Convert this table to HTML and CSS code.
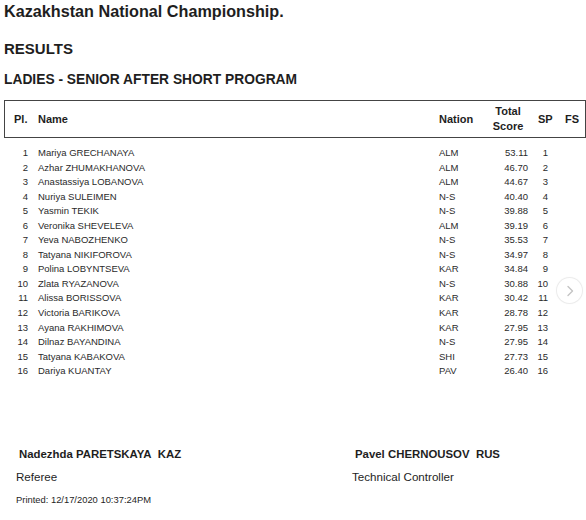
FILE: index.html
```html
<!DOCTYPE html>
<html>
<head>
<meta charset="utf-8">
<link rel="stylesheet" href="styles.css">
</head>
<body>
<div class="page">
  <h1 class="title">Kazakhstan National Championship.</h1>
  <h2 class="results">RESULTS</h2>
  <h3 class="category">LADIES - SENIOR AFTER SHORT PROGRAM</h3>

  <div class="table-head">
    <span class="c-pl">Pl.</span>
    <span class="c-name">Name</span>
    <span class="c-nation">Nation</span>
    <span class="c-score">Total<br>Score</span>
    <span class="c-sp">SP</span>
    <span class="c-fs">FS</span>
  </div>

  <div class="rows">
    <div class="row"><span class="c-pl">1</span><span class="c-name">Mariya GRECHANAYA</span><span class="c-nation">ALM</span><span class="c-score">53.11</span><span class="c-sp">1</span></div>
    <div class="row"><span class="c-pl">2</span><span class="c-name">Azhar ZHUMAKHANOVA</span><span class="c-nation">ALM</span><span class="c-score">46.70</span><span class="c-sp">2</span></div>
    <div class="row"><span class="c-pl">3</span><span class="c-name">Anastassiya LOBANOVA</span><span class="c-nation">ALM</span><span class="c-score">44.67</span><span class="c-sp">3</span></div>
    <div class="row"><span class="c-pl">4</span><span class="c-name">Nuriya SULEIMEN</span><span class="c-nation">N-S</span><span class="c-score">40.40</span><span class="c-sp">4</span></div>
    <div class="row"><span class="c-pl">5</span><span class="c-name">Yasmin TEKIK</span><span class="c-nation">N-S</span><span class="c-score">39.88</span><span class="c-sp">5</span></div>
    <div class="row"><span class="c-pl">6</span><span class="c-name">Veronika SHEVELEVA</span><span class="c-nation">ALM</span><span class="c-score">39.19</span><span class="c-sp">6</span></div>
    <div class="row"><span class="c-pl">7</span><span class="c-name">Yeva NABOZHENKO</span><span class="c-nation">N-S</span><span class="c-score">35.53</span><span class="c-sp">7</span></div>
    <div class="row"><span class="c-pl">8</span><span class="c-name">Tatyana NIKIFOROVA</span><span class="c-nation">N-S</span><span class="c-score">34.97</span><span class="c-sp">8</span></div>
    <div class="row"><span class="c-pl">9</span><span class="c-name">Polina LOBYNTSEVA</span><span class="c-nation">KAR</span><span class="c-score">34.84</span><span class="c-sp">9</span></div>
    <div class="row"><span class="c-pl">10</span><span class="c-name">Zlata RYAZANOVA</span><span class="c-nation">N-S</span><span class="c-score">30.88</span><span class="c-sp">10</span></div>
    <div class="row"><span class="c-pl">11</span><span class="c-name">Alissa BORISSOVA</span><span class="c-nation">KAR</span><span class="c-score">30.42</span><span class="c-sp">11</span></div>
    <div class="row"><span class="c-pl">12</span><span class="c-name">Victoria BARIKOVA</span><span class="c-nation">KAR</span><span class="c-score">28.78</span><span class="c-sp">12</span></div>
    <div class="row"><span class="c-pl">13</span><span class="c-name">Ayana RAKHIMOVA</span><span class="c-nation">KAR</span><span class="c-score">27.95</span><span class="c-sp">13</span></div>
    <div class="row"><span class="c-pl">14</span><span class="c-name">Dilnaz BAYANDINA</span><span class="c-nation">N-S</span><span class="c-score">27.95</span><span class="c-sp">14</span></div>
    <div class="row"><span class="c-pl">15</span><span class="c-name">Tatyana KABAKOVA</span><span class="c-nation">SHI</span><span class="c-score">27.73</span><span class="c-sp">15</span></div>
    <div class="row"><span class="c-pl">16</span><span class="c-name">Dariya KUANTAY</span><span class="c-nation">PAV</span><span class="c-score">26.40</span><span class="c-sp">16</span></div>
  </div>

  <div class="officials">
    <div class="official">
      <div class="off-name">Nadezhda PARETSKAYA&nbsp; KAZ</div>
      <div class="off-role">Referee</div>
    </div>
    <div class="official second">
      <div class="off-name">Pavel CHERNOUSOV&nbsp; RUS</div>
      <div class="off-role">Technical Controller</div>
    </div>
  </div>
  <div class="printed">Printed: 12/17/2020 10:37:24PM</div>

  <div class="next-btn">
    <svg width="10" height="12" viewBox="0 0 10 12"><path d="M3 1.5 L7.5 6 L3 10.5" fill="none" stroke="#c4c4c4" stroke-width="1.4" stroke-linecap="round" stroke-linejoin="round"/></svg>
  </div>
</div>
</body>
</html>
```

FILE: styles.css
```css
html, body {
  margin: 0;
  padding: 0;
  background: #fff;
}
body {
  font-family: "Liberation Sans", Arial, sans-serif;
  color: #1e1e1e;
  width: 586px;
  height: 520px;
  overflow: hidden;
}
.page {
  position: relative;
  padding: 2px 0 0 4px;
}
.title {
  margin: 0;
  font-size: 16.2px;
  line-height: 19px;
  font-weight: bold;
}
.results {
  margin: 19px 0 0;
  font-size: 15px;
  line-height: 18px;
  font-weight: bold;
}
.category {
  margin: 14px 0 0;
  font-size: 13.8px;
  line-height: 16px;
  font-weight: bold;
}
.table-head,
.row {
  display: grid;
  grid-template-columns: 24px 402px 50px 48px 20px 38px;
  align-items: center;
}
.table-head {
  margin-top: 12px;
  height: 38px;
  border: 1.5px solid #444;
  width: 582px;
  box-sizing: border-box;
  font-weight: bold;
  font-size: 11px;
  line-height: 15px;
}
.table-head .c-pl { padding-left: 9px; }
.table-head .c-name { padding-left: 9px; }
.table-head .c-nation { padding-left: 8px; }
.table-head .c-score { text-align: center; padding-left: 6px; }
.table-head .c-sp { padding-left: 9px; }
.table-head .c-fs { padding-left: 16px; }
.rows {
  margin-top: 8px;
  font-size: 9.5px;
  line-height: 14.55px;
  color: #2a2a2a;
}
.row .c-pl { text-align: right; }
.row .c-name { padding-left: 10px; }
.row .c-nation { padding-left: 9px; }
.row .c-score { text-align: right; }
.row .c-sp { text-align: right; }
.officials {
  display: flex;
  margin-top: 68px;
}
.official {
  width: 348px;
  padding-left: 12px;
  box-sizing: border-box;
}
.official.second {
  width: 234px;
  padding-left: 0;
}
.off-name {
  font-weight: bold;
  font-size: 11.4px;
  line-height: 14px;
  padding-left: 3px;
}
.off-role {
  margin-top: 9px;
  font-size: 11.6px;
  line-height: 14px;
}
.printed {
  margin: 10px 0 0 12px;
  font-size: 9.4px;
  line-height: 12px;
}
.next-btn {
  position: absolute;
  left: 557px;
  top: 278px;
  width: 25px;
  height: 25px;
  border-radius: 50%;
  background: #fff;
  box-shadow: 0 0 0 1px #ececec, 0 0 3px rgba(0,0,0,0.06);
  display: flex;
  align-items: center;
  justify-content: center;
}
```
